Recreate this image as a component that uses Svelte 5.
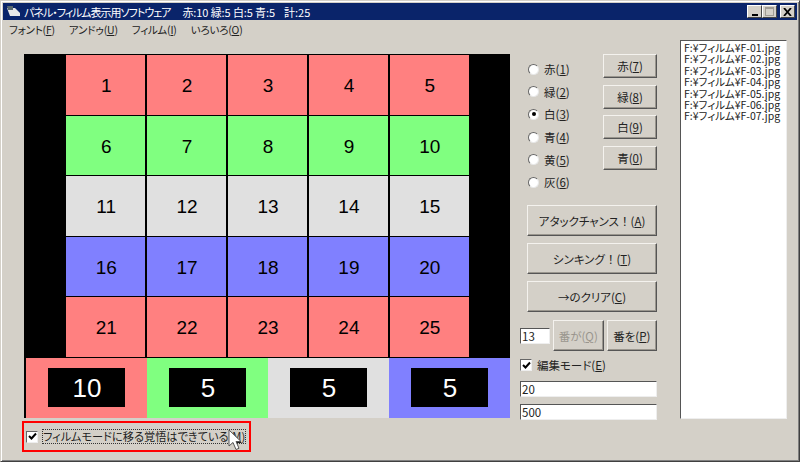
<script>
	const panels = [
		{ color: 'red', nums: [1, 2, 3, 4, 5] },
		{ color: 'green', nums: [6, 7, 8, 9, 10] },
		{ color: 'white', nums: [11, 12, 13, 14, 15] },
		{ color: 'blue', nums: [16, 17, 18, 19, 20] },
		{ color: 'red', nums: [21, 22, 23, 24, 25] }
	];
	const scores = [
		{ color: 'red', n: 10 },
		{ color: 'green', n: 5 },
		{ color: 'white', n: 5 },
		{ color: 'blue', n: 5 }
	];
	const radios = [
		['赤', '1'],
		['緑', '2'],
		['白', '3'],
		['青', '4'],
		['黄', '5'],
		['灰', '6']
	];
	const colorButtons = [
		['赤', '7'],
		['緑', '8'],
		['白', '9'],
		['青', '0']
	];
	const files = ['01', '02', '03', '04', '05', '06', '07'];
</script>

<div class="window">
	<div class="titlebar">
		<svg class="appicon" width="15" height="13" viewBox="0 0 15 13">
			<path d="M1 3h8l5 5v3H4z" fill="#e8e8e8" />
			<path d="M1 1h6v4H2z" fill="#5a6a70" />
		</svg>
		<span class="title">パネル・フィルム表示用ソフトウェア</span>
		<span class="counts">赤:10 緑:5 白:5 青:5</span>
		<span class="total">計:25</span>
		<div class="winbtns">
			<span class="winbtn"><i class="min"></i></span>
			<span class="winbtn off"><i class="max"></i></span>
			<span class="winbtn close">
				<svg width="9" height="8" viewBox="0 0 9 8"><path d="M1 0l7 8M8 0l-7 8" stroke="#000" stroke-width="1.800" fill="none" /></svg>
			</span>
		</div>
	</div>
	<div class="menubar">
		<span>フォント(<u>F</u>)</span>
		<span>アンドゥ(<u>U</u>)</span>
		<span>フィルム(<u>I</u>)</span>
		<span>いろいろ(<u>O</u>)</span>
	</div>

	<div class="content">
		<div class="left">
			<div class="board">
				{#each panels as row}
					<div class="row">
						{#each row.nums as n}
							<div class="panel {row.color}">{n}</div>
						{/each}
					</div>
				{/each}
				<div class="scores">
					{#each scores as s}
						<div class="score {s.color}"><div class="count">{s.n}</div></div>
					{/each}
				</div>
			</div>
			<div class="filmmode">
				<span class="check"><svg width="9" height="9" viewBox="0 0 9 9"><path d="M1 4l2.500 2.500L8 1.500" stroke="#000" stroke-width="2" fill="none" /></svg></span>
				<span class="filmlabel">フィルムモードに移る覚悟はできている(<u>M</u>)</span>
				<svg class="cursor" width="14" height="22" viewBox="0 0 14 22">
					<path d="M1 1v16l4-3.500 3 7 3-1.200-3-6.800h5z" fill="#fff" stroke="#555" stroke-width="1" />
				</svg>
			</div>
		</div>

		<div class="controls">
			<div class="colors">
				<div class="radios">
					{#each radios as [name, key], i}
						<div class="radio">
							<span class="dot" class:on={i === 2}></span>
							<span>{name}(<u>{key}</u>)</span>
						</div>
					{/each}
				</div>
				<div class="colorbtns">
					{#each colorButtons as [name, key]}
						<button>{name}(<u>{key}</u>)</button>
					{/each}
				</div>
			</div>
			<div class="bigbtns">
				<button>アタックチャンス<span class="bang">！</span>(<u>A</u>)</button>
				<button>シンキング<span class="bang">！</span>(<u>T</u>)</button>
				<button>→のクリア(<u>C</u>)</button>
			</div>
			<div class="numrow">
				<input class="numinput" value="13" />
				<button class="disabled">番が(<u>Q</u>)</button>
				<button>番を(<u>P</u>)</button>
			</div>
			<div class="editmode">
				<span class="check"><svg width="9" height="9" viewBox="0 0 9 9"><path d="M1 4l2.500 2.500L8 1.500" stroke="#000" stroke-width="2" fill="none" /></svg></span>
				<span>編集モード(<u>E</u>)</span>
			</div>
			<input class="wide" value="20" />
			<input class="wide" value="500" />
		</div>

		<div class="list">
			{#each files as f}
				<div>F:¥フィルム¥F-{f}.jpg</div>
			{/each}
		</div>
	</div>
</div>

<style>
	:global(body) {
		margin: 0;
		background: #d4d0c8;
	}

	.window {
		box-sizing: border-box;
		width: 800px;
		height: 462px;
		padding: 1px;
		background: #d4d0c8;
		border: 1px solid;
		border-color: #d4d0c8 #404040 #404040 #d4d0c8;
		box-shadow: inset 1px 1px 0 #fff, inset -1px -1px 0 #808080;
		font-family: "Noto Sans CJK JP", "Liberation Sans", sans-serif;
		font-feature-settings: "palt";
		font-size: 11.500px;
		color: #222;
		overflow: hidden;
	}

	.titlebar {
		display: flex;
		align-items: center;
		height: 17px;
		margin: 1px 1px 0;
		padding: 0 2px 0 3px;
		background: #0a246a;
		color: #fff;
		font-size: 11px;
		white-space: nowrap;
	}

	.appicon {
		margin-right: 3px;
	}

	.title {
		letter-spacing: -1px;
	}

	.counts {
		margin-left: 12px;
		letter-spacing: -0.1px;
	}

	.total {
		margin-left: 9px;
	}

	.winbtns {
		display: flex;
		margin-left: auto;
	}

	.winbtn {
		box-sizing: border-box;
		display: flex;
		width: 15px;
		height: 13px;
		align-items: center;
		justify-content: center;
		background: #d4d0c8;
		border: 1px solid;
		border-color: #fff #444 #444 #fff;
	}

	.winbtn.close {
		margin-left: 3px;
	}

	.min {
		width: 6px;
		height: 2px;
		margin-top: 6px;
		background: #000;
	}

	.max {
		box-sizing: border-box;
		width: 9px;
		height: 9px;
		border: 1px solid #a09c94;
		border-top-width: 2px;
	}

	.menubar {
		display: flex;
		gap: 14px;
		height: 19px;
		align-items: center;
		padding-left: 7px;
		font-size: 10.500px;
		letter-spacing: -0.2px;
	}

	.content {
		display: flex;
		align-items: flex-start;
		padding: 1px 0 0 22px;
	}

	.left {
		width: 486px;
		margin-top: 14px;
	}

	.board {
		display: flex;
		flex-direction: column;
		gap: 1px;
		height: 364px;
		background: #000;
		padding-top: 1px;
		box-sizing: border-box;
	}

	.row {
		display: flex;
		flex: 0 0 59.500px;
		gap: 1.500px;
		padding: 0 41px 0 42px;
	}

	.panel {
		flex: 1;
		display: flex;
		align-items: center;
		justify-content: center;
		padding: 3px 0 0 1px;
		font-family: "Liberation Sans", sans-serif;
		font-size: 19px;
		color: #000;
	}

	.red { background: #ff8080; }
	.green { background: #80ff80; }
	.white { background: #e0e0e0; }
	.blue { background: #8080ff; }

	.scores {
		display: flex;
		flex: 1;
		padding-left: 2px;
	}

	.score {
		flex: 1;
		display: flex;
		align-items: center;
		justify-content: center;
	}

	.count {
		box-sizing: border-box;
		display: flex;
		width: 77px;
		height: 39px;
		align-items: center;
		justify-content: center;
		padding: 1px 0 0 1px;
		background: #000;
		color: #fff;
		font-family: "Liberation Sans", sans-serif;
		font-size: 26px;
	}

	.filmmode {
		position: relative;
		box-sizing: border-box;
		display: flex;
		align-items: center;
		gap: 4px;
		width: 229px;
		height: 31px;
		margin: 3px 0 0 -2px;
		padding-left: 2px;
		border: 2px solid #f00;
	}

	.filmlabel {
		border: 1px dotted #333;
		line-height: 13px;
		font-size: 11.200px;
		white-space: nowrap;
	}

	.cursor {
		position: absolute;
		left: 204px;
		top: 6px;
	}

	.check {
		box-sizing: border-box;
		display: flex;
		width: 12px;
		height: 12px;
		flex: none;
		align-items: center;
		justify-content: center;
		background: #fff;
		border: 1px solid;
		border-color: #666 #eee #eee #666;
	}

	.controls {
		width: 137px;
		margin: 14px 0 0 10px;
		display: flex;
		flex-direction: column;
	}

	.colors {
		display: flex;
		justify-content: space-between;
	}

	.radios {
		display: flex;
		flex-direction: column;
		gap: 4.700px;
		margin: 6px 0 0 8px;
	}

	.radio {
		display: flex;
		align-items: center;
		gap: 5px;
		height: 18px;
	}

	.dot {
		box-sizing: border-box;
		position: relative;
		width: 11px;
		height: 11px;
		border-radius: 50%;
		background: #fff;
		border: 1px solid;
		border-color: #666 #e8e8e8 #e8e8e8 #666;
	}

	.dot.on::after {
		content: "";
		position: absolute;
		left: 2.500px;
		top: 2.500px;
		width: 4px;
		height: 4px;
		border-radius: 50%;
		background: #000;
	}

	.colorbtns {
		display: flex;
		flex-direction: column;
		gap: 6.700px;
		width: 54px;
	}

	.colorbtns button {
		height: 24px;
	}

	button {
		box-sizing: border-box;
		padding: 0;
		background: #d4d0c8;
		border: 1px solid;
		border-color: #f4f2ee #555 #555 #f4f2ee;
		box-shadow: inset -1px -1px 0 #9a968e;
		font: inherit;
		font-feature-settings: "palt";
		color: #222;
		white-space: nowrap;
	}

	.bang {
		font-feature-settings: normal;
	}

	.bigbtns {
		display: flex;
		flex-direction: column;
		gap: 7px;
		margin-top: 14px;
		margin-left: 7px;
	}

	.bigbtns button {
		height: 31px;
	}

	.numrow {
		display: flex;
		align-items: center;
		margin-top: 8px;
	}

	.numrow button {
		width: 51px;
		height: 31px;
		margin-left: 3px;
	}

	.numrow .disabled {
		color: #9a968e;
	}

	input {
		box-sizing: border-box;
		margin: 0;
		padding: 0 1px;
		background: #fff;
		border: 1px solid;
		border-color: #555 #eee #eee #555;
		font: inherit;
		color: #222;
		outline: none;
	}

	.numinput {
		width: 30px;
		height: 16px;
	}

	.editmode {
		display: flex;
		align-items: center;
		gap: 5px;
		height: 18px;
		margin-top: 5px;
	}

	.wide {
		width: 137px;
		height: 16px;
		margin-top: 7px;
	}

	.list {
		box-sizing: border-box;
		width: 107px;
		height: 379px;
		margin-left: 23px;
		padding: 1px 0 0 3px;
		background: #fff;
		border: 1px solid;
		border-color: #555 #eee #eee #555;
		font-size: 10.500px;
		line-height: 11.400px;
		white-space: nowrap;
		overflow: hidden;
	}
</style>
